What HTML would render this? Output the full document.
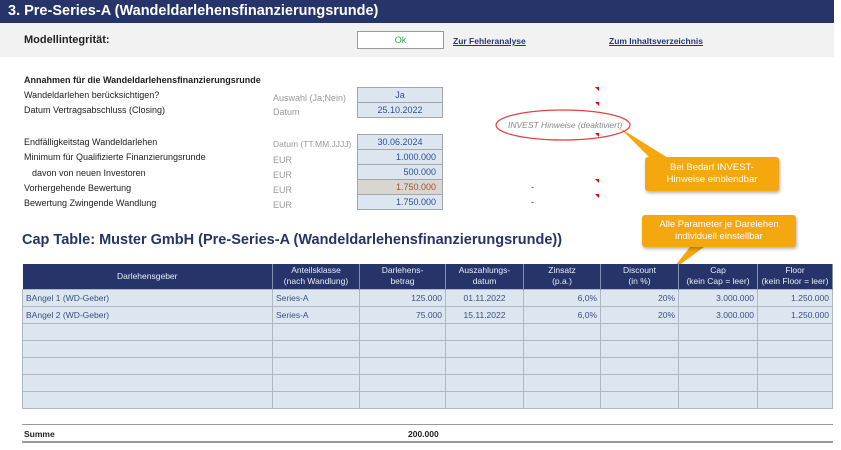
<!DOCTYPE html>
<html><head><meta charset="utf-8"><style>
*{margin:0;padding:0;box-sizing:border-box}
body{width:841px;height:450px;background:#fff;font-family:"Liberation Sans",Arial,sans-serif;position:relative;overflow:hidden;color:#222}
.a{position:absolute;white-space:nowrap}
.s{font-size:9px}
.g{color:#999}
.v{position:absolute;left:357px;width:86px;background:#dce6f1;border:1px solid #a6a6a6;font-size:9px;color:#2f4f8f;text-align:right;padding-right:6px;line-height:14px}
table{position:absolute;left:22px;top:264px;border-collapse:collapse;font-size:8.5px;width:811px}
th{background:#26346a;color:#e8ecf5;font-weight:normal;height:25px;line-height:11px;border-right:1px solid #8090b0}
td{background:#dce6f1;height:17px;border:1px solid #b0b8c4;color:#3a4f80;padding:0 3px}
.r{text-align:right}.c{text-align:center}
.call{position:absolute;background:#f5a70f;color:#fff;font-size:9.5px;text-align:center;line-height:12px;border-radius:3px;box-shadow:1px 2px 3px rgba(0,0,0,.3)}
</style></head><body>
<div class="a" style="left:0;top:0;width:834px;height:23px;background:#26346a"></div>
<div class="a" style="left:8px;top:3px;font-size:14.5px;font-weight:bold;color:#fff">3. Pre-Series-A (Wandeldarlehensfinanzierungsrunde)</div>
<div class="a" style="left:0;top:23px;width:834px;height:34px;background:#f2f2f2"></div>
<div class="a" style="left:24px;top:34px;font-size:11px;font-weight:bold">Modellintegrität:</div>
<div class="a" style="left:357px;top:31px;width:87px;height:18px;border:1px solid #999;background:#fff;color:#2eaa4e;font-size:9px;text-align:center;line-height:16px">Ok</div>
<div class="a s" style="left:453px;top:36px;font-weight:bold;color:#1f3870;text-decoration:underline;font-size:8.5px">Zur Fehleranalyse</div>
<div class="a s" style="left:609px;top:36px;font-weight:bold;color:#1f3870;text-decoration:underline;font-size:8.5px">Zum Inhaltsverzeichnis</div>

<div class="a s" style="left:24px;top:75px;font-weight:bold">Annahmen für die Wandeldarlehensfinanzierungsrunde</div>
<div class="a s" style="left:24px;top:90px">Wandeldarlehen berücksichtigen?</div>
<div class="a s" style="left:24px;top:105px">Datum Vertragsabschluss (Closing)</div>
<div class="a s" style="left:24px;top:137px">Endfälligkeitstag Wandeldarlehen</div>
<div class="a s" style="left:24px;top:152px">Minimum für Qualifizierte Finanzierungsrunde</div>
<div class="a s" style="left:32px;top:168px">davon von neuen Investoren</div>
<div class="a s" style="left:24px;top:183px">Vorhergehende Bewertung</div>
<div class="a s" style="left:24px;top:198px">Bewertung Zwingende Wandlung</div>
<div class="a s g" style="left:273px;top:93px">Auswahl (Ja;Nein)</div>
<div class="a s g" style="left:273px;top:107px">Datum</div>
<div class="a s g" style="left:273px;top:139px;font-size:8.5px">Datum (TT.MM.JJJJ)</div>
<div class="a s g" style="left:273px;top:155px">EUR</div>
<div class="a s g" style="left:273px;top:170px">EUR</div>
<div class="a s g" style="left:273px;top:185px">EUR</div>
<div class="a s g" style="left:273px;top:200px">EUR</div>
<div class="v" style="top:87px;height:16px;text-align:center;padding:0">Ja</div>
<div class="v" style="top:102px;height:16px;text-align:center;padding:0">25.10.2022</div>
<div class="v" style="top:134px;height:16px;text-align:center;padding:0">30.06.2024</div>
<div class="v" style="top:149px;height:16px">1.000.000</div>
<div class="v" style="top:164px;height:16px">500.000</div>
<div class="v" style="top:179px;height:16px;background:#d9d5d0;color:#a0522d">1.750.000</div>
<div class="v" style="top:194px;height:16px">1.750.000</div>
<div class="a s" style="left:531px;top:182px">-</div>
<div class="a s" style="left:531px;top:197px">-</div>

<svg class="a" style="left:0;top:0" width="841" height="450">
<g fill="#e00"><polygon points="595,87 599,87 599,91"/><polygon points="595,102 599,102 599,106"/><polygon points="595,133 599,133 599,137"/><polygon points="595,179 599,179 599,183"/><polygon points="595,194 599,194 599,198"/><polygon points="752,264 756,264 756,268"/><polygon points="829,264 833,264 833,268"/></g>
<polygon points="620,128 650,158 668,158" fill="#f5a70f"/>
<polygon points="670,272 690,247 704,247" fill="#f5a70f"/>
<ellipse cx="563" cy="125" rx="67" ry="15" fill="none" stroke="#e84040" stroke-width="1.2"/>
</svg>
<div class="a" style="left:508px;top:120px;font-size:8.5px;font-style:italic;color:#888">INVEST Hinweise (deaktiviert)</div>
<div class="call" style="left:645px;top:157px;width:134px;height:34px;padding-top:5px">Bei Bedarf INVEST-<br>Hinweise einblendbar</div>
<div class="call" style="left:642px;top:215px;width:154px;height:32px;padding-top:4px">Alle Parameter je Darelehen<br>individuell einstellbar</div>

<div class="a" style="left:22px;top:232px;font-size:14.5px;font-weight:bold;color:#26346a">Cap Table: Muster GmbH (Pre-Series-A (Wandeldarlehensfinanzierungsrunde))</div>
<table>
<tr><th style="width:250px">Darlehensgeber</th><th style="width:87px">Anteilsklasse<br>(nach Wandlung)</th><th style="width:86px">Darlehens-<br>betrag</th><th style="width:78px">Auszahlungs-<br>datum</th><th style="width:77px">Zinsatz<br>(p.a.)</th><th style="width:78px">Discount<br>(in %)</th><th style="width:79px">Cap<br>(kein Cap = leer)</th><th>Floor<br>(kein Floor = leer)</th></tr>
<tr><td>BAngel 1 (WD-Geber)</td><td>Series-A</td><td class="r">125.000</td><td class="c">01.11.2022</td><td class="r">6,0%</td><td class="r">20%</td><td class="r">3.000.000</td><td class="r">1.250.000</td></tr>
<tr><td>BAngel 2 (WD-Geber)</td><td>Series-A</td><td class="r">75.000</td><td class="c">15.11.2022</td><td class="r">6,0%</td><td class="r">20%</td><td class="r">3.000.000</td><td class="r">1.250.000</td></tr>
<tr><td></td><td></td><td></td><td></td><td></td><td></td><td></td><td></td></tr>
<tr><td></td><td></td><td></td><td></td><td></td><td></td><td></td><td></td></tr>
<tr><td></td><td></td><td></td><td></td><td></td><td></td><td></td><td></td></tr>
<tr><td></td><td></td><td></td><td></td><td></td><td></td><td></td><td></td></tr>
<tr><td></td><td></td><td></td><td></td><td></td><td></td><td></td><td></td></tr>
</table>
<div class="a" style="left:22px;top:424px;width:811px;height:1px;background:#999"></div>
<div class="a s" style="left:24px;top:429px;font-weight:bold;font-size:8.5px">Summe</div>
<div class="a s" style="left:408px;top:429px;font-weight:bold;font-size:8.5px">200.000</div>
<div class="a" style="left:22px;top:441px;width:811px;height:2px;background:#999"></div>
</body></html>
